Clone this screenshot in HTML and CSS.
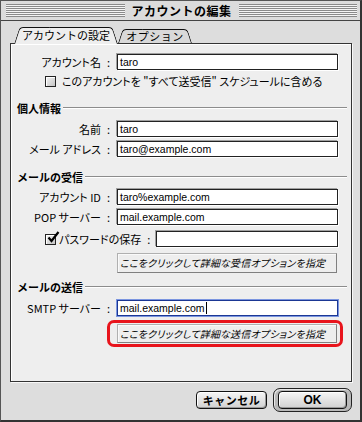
FILE: index.html
```html
<!DOCTYPE html>
<html lang="ja">
<head>
<meta charset="utf-8">
<title>アカウントの編集</title>
<link rel="stylesheet" href="styles.css">
</head>
<body>
<div class="window">
  <div class="titlebar">
    <span class="stripes"></span>
    <span class="title">アカウントの編集</span>
    <span class="stripes"></span>
  </div>
  <div class="content">
    <div class="tabs">
      <div class="tab active"><span>アカウントの設定</span></div>
      <div class="tab inactive"><span>オプション</span></div>
    </div>
    <div class="panel">
      <div class="row r-first">
        <span class="lbl">アカウント名<span class="colon">:</span></span>
        <div class="field">taro</div>
      </div>
      <div class="check-row r-check">
        <span class="cb"></span>
        <span class="cb-text">このアカウントを "すべて送受信" スケジュールに含める</span>
      </div>

      <div class="group g-personal"><span>個人情報</span></div>
      <div class="row r-g1">
        <span class="lbl">名前<span class="colon">:</span></span>
        <div class="field">taro</div>
      </div>
      <div class="row r-next">
        <span class="lbl">メール アドレス<span class="colon">:</span></span>
        <div class="field">taro@example.com</div>
      </div>

      <div class="group g-recv"><span>メールの受信</span></div>
      <div class="row r-g2">
        <span class="lbl">アカウント ID<span class="colon">:</span></span>
        <div class="field">taro%example.com</div>
      </div>
      <div class="row r-next">
        <span class="lbl">POP サーバー<span class="colon">:</span></span>
        <div class="field">mail.example.com</div>
      </div>
      <div class="row pw-row">
        <span class="cb checked">
          <svg width="14" height="14" viewBox="0 0 14 14"><path d="M2.5 6.5 L5.5 10 L12.5 1" fill="none" stroke="#000" stroke-width="2.2"/></svg>
        </span>
        <span class="pw-lbl">パスワードの保存<span class="colon">:</span></span>
        <div class="field pw-field"></div>
      </div>
      <div class="opt-btn recv-btn">ここをクリックして詳細な受信オプションを指定</div>

      <div class="group g-send"><span>メールの送信</span></div>
      <div class="row r-g3">
        <span class="lbl">SMTP サーバー<span class="colon">:</span></span>
        <div class="field focused">mail.example.com<span class="caret"></span></div>
      </div>
      <div class="highlight">
        <div class="opt-btn">ここをクリックして詳細な送信オプションを指定</div>
      </div>
    </div>
    <div class="buttons">
      <div class="btn cancel">キャンセル</div>
      <div class="ok-ring"><div class="btn ok">OK</div></div>
    </div>
  </div>
</div>
</body>
</html>
```

FILE: styles.css
```css
* { box-sizing: border-box; margin: 0; padding: 0; }
html, body { width: 362px; height: 422px; overflow: hidden; }
body {
  background: #ffffff;
  font-family: "Noto Sans CJK JP", sans-serif;
  font-size: 11px;
  color: #000;
}
.window {
  width: 362px;
  height: 422px;
  background: #dddddd;
  border: 1px solid #555;
  border-right: 2px solid #333;
  border-bottom: 2px solid #333;
  display: flex;
  flex-direction: column;
}
.titlebar {
  height: 20px;
  flex: none;
  display: flex;
  align-items: center;
  gap: 7px;
  padding: 0 3px 0 5px;
  border-bottom: 1px solid #444;
  background: #dcdcdc;
}
.stripes {
  flex: 1;
  height: 13px;
  background: repeating-linear-gradient(to bottom, #8a8a8a 0 1px, #f4f4f4 1px 2px);
}
.title {
  font-weight: bold;
  font-size: 12px;
  letter-spacing: 0.5px;
  line-height: 14px;
}
.content {
  flex: 1;
  padding: 6px 8px 0 9px;
  display: flex;
  flex-direction: column;
}
.tabs {
  display: flex;
  align-items: flex-end;
  height: 16px;
  padding-left: 4px;
  position: relative;
  z-index: 2;
  flex: none;
}
.tab {
  position: relative;
  height: 14px;
  display: flex;
  align-items: center;
  justify-content: center;
  font-size: 11px;
}
.tab.active {
  width: 104px;
  height: 17px;
  margin-bottom: -1px;
  z-index: 2;
  padding-bottom: 1px;
}
.tab.inactive {
  width: 74px;
  z-index: 1;
  letter-spacing: 0.5px;
}
.tab::before,
.tab::after {
  content: "";
  position: absolute;
  top: 0;
  bottom: 0;
  width: 60%;
  border-top: 1px solid #111;
  transform-origin: bottom;
}
.tab::before {
  left: 0;
  border-left: 1px solid #111;
  border-top-left-radius: 4px;
  transform: skewX(-18deg);
}
.tab::after {
  right: 0;
  border-right: 1px solid #111;
  border-top-right-radius: 4px;
  transform: skewX(18deg);
}
.tab.active::before,
.tab.active::after { background: #eeeeee; }
.tab.inactive::before,
.tab.inactive::after { background: #d9d9d9; }
.tab span { position: relative; z-index: 1; line-height: 13px; }

.panel {
  height: 339px;
  flex: none;
  background: #eeeeee;
  border: 1px solid #333;
  box-shadow: inset 1px 1px 0 #ffffff, 1px 1px 0 #f8f8f8;
  display: flex;
  flex-direction: column;
}
.row {
  display: flex;
  align-items: center;
  height: 16px;
  flex: none;
}
.r-first { margin-top: 10px; }
.r-next { margin-top: 4px; }
.r-g1 { margin-top: 6px; }
.r-g2 { margin-top: 5px; }
.r-g3 { margin-top: 6px; }
.lbl {
  width: 102px;
  text-align: right;
  padding-right: 3px;
  font-size: 11px;
  line-height: 14px;
  font-feature-settings: "palt";
  white-space: nowrap;
}
.colon {
  margin-left: 6px;
}
.field {
  width: 221px;
  height: 16px;
  margin-left: 4px;
  background: #fff;
  border: 1px solid #222;
  box-shadow: -1px -1px 0 #a0a0a0, 1px 1px 0 #ffffff;
  font-family: "Liberation Sans", sans-serif;
  font-size: 10.5px;
  line-height: 14px;
  padding-left: 2px;
  white-space: nowrap;
}
.field.focused {
  border-color: #1b3794;
  box-shadow: 0 0 0 1px #7b95e0;
}
.caret {
  display: inline-block;
  width: 1px;
  height: 12px;
  background: #000;
  vertical-align: -2px;
  margin-left: 1px;
}
.check-row {
  display: flex;
  align-items: center;
  height: 13px;
  padding-left: 34px;
  flex: none;
}
.r-check { margin-top: 5px; }
.cb {
  width: 11px;
  height: 11px;
  border: 1px solid #222;
  background: linear-gradient(135deg, #f4f4f4, #c4c4c4);
  box-shadow: inset 1px 1px 0 #fff;
  flex: none;
  position: relative;
}
.cb svg {
  position: absolute;
  left: 0;
  top: -4px;
}
.cb-text {
  margin-left: 6px;
  font-size: 11px;
  line-height: 13px;
  font-feature-settings: "palt";
  white-space: nowrap;
}
.group {
  display: flex;
  align-items: center;
  height: 13px;
  margin-left: 6px;
  margin-right: 4px;
  flex: none;
  font-weight: bold;
  font-size: 11px;
}
.group span { line-height: 13px; }
.group::after {
  content: "";
  flex: 1;
  height: 1px;
  background: #8c8c8c;
  box-shadow: 0 1px 0 #ffffff;
  margin-left: 2px;
  margin-top: -2px;
}
.g-personal { margin-top: 14px; }
.g-recv { margin-top: 14px; }
.g-send { margin-top: 8px; }
.pw-row {
  margin-top: 6px;
  padding-left: 34px;
}
.pw-lbl {
  margin-left: 3px;
  font-feature-settings: "palt";
  line-height: 14px;
  white-space: nowrap;
}
.pw-field {
  width: 182px;
  margin-left: auto;
  margin-right: 13px;
}
.opt-btn {
  width: 220px;
  height: 20px;
  background: #eeeeee;
  border: 1px solid #b0b0b0;
  border-right-color: #808080;
  border-bottom-color: #808080;
  box-shadow: inset 1px 1px 0 #fafafa;
  font-size: 10px;
  font-style: italic;
  font-feature-settings: "palt";
  letter-spacing: 0.2px;
  line-height: 18px;
  padding-left: 2px;
  white-space: nowrap;
  flex: none;
}
.recv-btn {
  margin-top: 6px;
  margin-left: 106px;
}
.highlight {
  margin-top: 4px;
  margin-left: 96px;
  width: 236px;
  height: 27px;
  border: 3px solid #e8141c;
  border-radius: 7px;
  padding: 1px 0 0 7px;
  flex: none;
}
.highlight .opt-btn { height: 19px; }
.buttons {
  display: flex;
  justify-content: flex-end;
  align-items: center;
  gap: 6px;
  margin-top: 6px;
  height: 24px;
  padding-right: 0;
}
.btn {
  display: flex;
  align-items: center;
  justify-content: center;
  border: 1px solid #111;
  border-radius: 4px;
  background: linear-gradient(to bottom, #f6f6f6, #d0d0d0);
  box-shadow: inset 1px 1px 0 #fff, inset -1px -1px 0 #999;
  font-weight: bold;
  font-size: 11px;
}
.cancel {
  width: 71px;
  height: 18px;
  letter-spacing: 0.5px;
}
.ok-ring {
  width: 79px;
  height: 24px;
  border: 1px solid #222;
  border-radius: 7px;
  background: #b8b8b8;
  box-shadow: inset 1px 1px 0 #e8e8e8;
  padding: 2px 4px;
}
.ok {
  width: 100%;
  height: 18px;
  font-family: "Liberation Sans", sans-serif;
  font-size: 12px;
}
```
